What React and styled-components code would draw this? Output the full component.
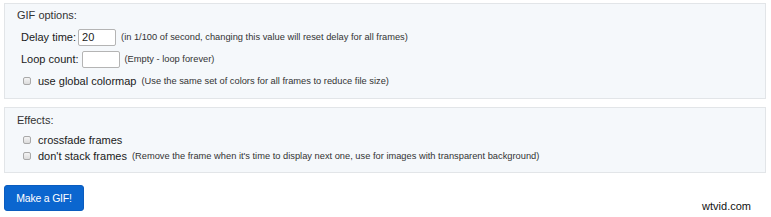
import React from "react";
import styled, { createGlobalStyle } from "styled-components";

const GlobalStyle = createGlobalStyle`
  html, body {
    margin: 0;
    padding: 0;
    background: #ffffff;
  }
  body {
    font-family: "Liberation Sans", Arial, sans-serif;
    color: #222;
  }
`;

function App() {
  return (
    <Page>
      <GlobalStyle />
      <Panel $bottom={6}>
        <Heading $h={22}>GIF options:</Heading>
        <Row $h={22}>
          <Label>Delay time:</Label>
          <NumberInput type="text" defaultValue="20" $ml={2} />
          <Hint>(in 1/100 of second, changing this value will reset delay for all frames)</Hint>
        </Row>
        <Row $h={22}>
          <Label>Loop count:</Label>
          <NumberInput type="text" defaultValue="" $ml={3} />
          <Hint>(Empty - loop forever)</Hint>
        </Row>
        <CheckRow $h={22}>
          <Box />
          <Label>use global colormap</Label>
          <Hint>(Use the same set of colors for all frames to reduce file size)</Hint>
        </CheckRow>
      </Panel>

      <Panel $top={8} $bottom={8}>
        <Heading $h={24}>Effects:</Heading>
        <CheckRow $h={16}>
          <Box />
          <Label>crossfade frames</Label>
        </CheckRow>
        <CheckRow $h={16}>
          <Box />
          <Label>don't stack frames</Label>
          <Hint>(Remove the frame when it's time to display next one, use for images with transparent background)</Hint>
        </CheckRow>
      </Panel>

      <Submit>Make a GIF!</Submit>
      <Watermark>wtvid.com</Watermark>
    </Page>
  );
}

export default App;

const Page = styled.div`
  position: relative;
  width: 771px;
  height: 217px;
  box-sizing: border-box;
  padding: 3px 5px 0 4px;
  display: flex;
  flex-direction: column;
  align-items: flex-start;
`;

const Panel = styled.div`
  align-self: stretch;
  display: flex;
  flex-direction: column;
  margin-top: ${(p) => p.$top || 0}px;
  padding: 0 12px ${(p) => p.$bottom}px 12px;
  background: #f5f8fb;
  border: 1px solid #e2e5e8;
`;

const Heading = styled.div`
  height: ${(p) => p.$h}px;
  line-height: ${(p) => p.$h}px;
  font-size: 11px;
  color: #333;
`;

const Row = styled.div`
  height: ${(p) => p.$h}px;
  display: flex;
  align-items: center;
  padding-left: 4px;
`;

const CheckRow = styled(Row)`
  padding-left: 6px;
`;

const Label = styled.span`
  font-size: 11px;
  color: #1a1a1a;
  white-space: nowrap;
`;

const Hint = styled.span`
  margin-left: 5px;
  font-size: 9.3px;
  color: #333;
  white-space: nowrap;
`;

const NumberInput = styled.input`
  box-sizing: border-box;
  width: 38px;
  height: 17px;
  margin: 0 0 0 ${(p) => p.$ml}px;
  padding: 0 3px;
  border: 1px solid #b4b4b4;
  border-radius: 2px;
  background: #fff;
  font-family: "Liberation Sans", Arial, sans-serif;
  font-size: 11px;
  color: #222;
  outline: none;
`;

const Box = styled.span`
  box-sizing: border-box;
  width: 8px;
  height: 8px;
  margin-right: 7px;
  border: 1px solid #a9a9a9;
  border-radius: 2px;
  background: linear-gradient(#f4f4f4, #dcdcdc);
  flex-shrink: 0;
`;

const Submit = styled.button`
  margin-top: 12px;
  width: 80px;
  height: 26px;
  padding: 0;
  border: 1px solid #0a5cbf;
  border-radius: 3px;
  background: #0b66cf;
  color: #fff;
  font-family: "Liberation Sans", Arial, sans-serif;
  font-size: 10.5px;
  letter-spacing: -0.2px;
  cursor: pointer;
`;

const Watermark = styled.span`
  position: absolute;
  right: 20px;
  bottom: 5px;
  font-family: "Liberation Sans", Arial, sans-serif;
  font-size: 11px;
  color: #111;
`;
